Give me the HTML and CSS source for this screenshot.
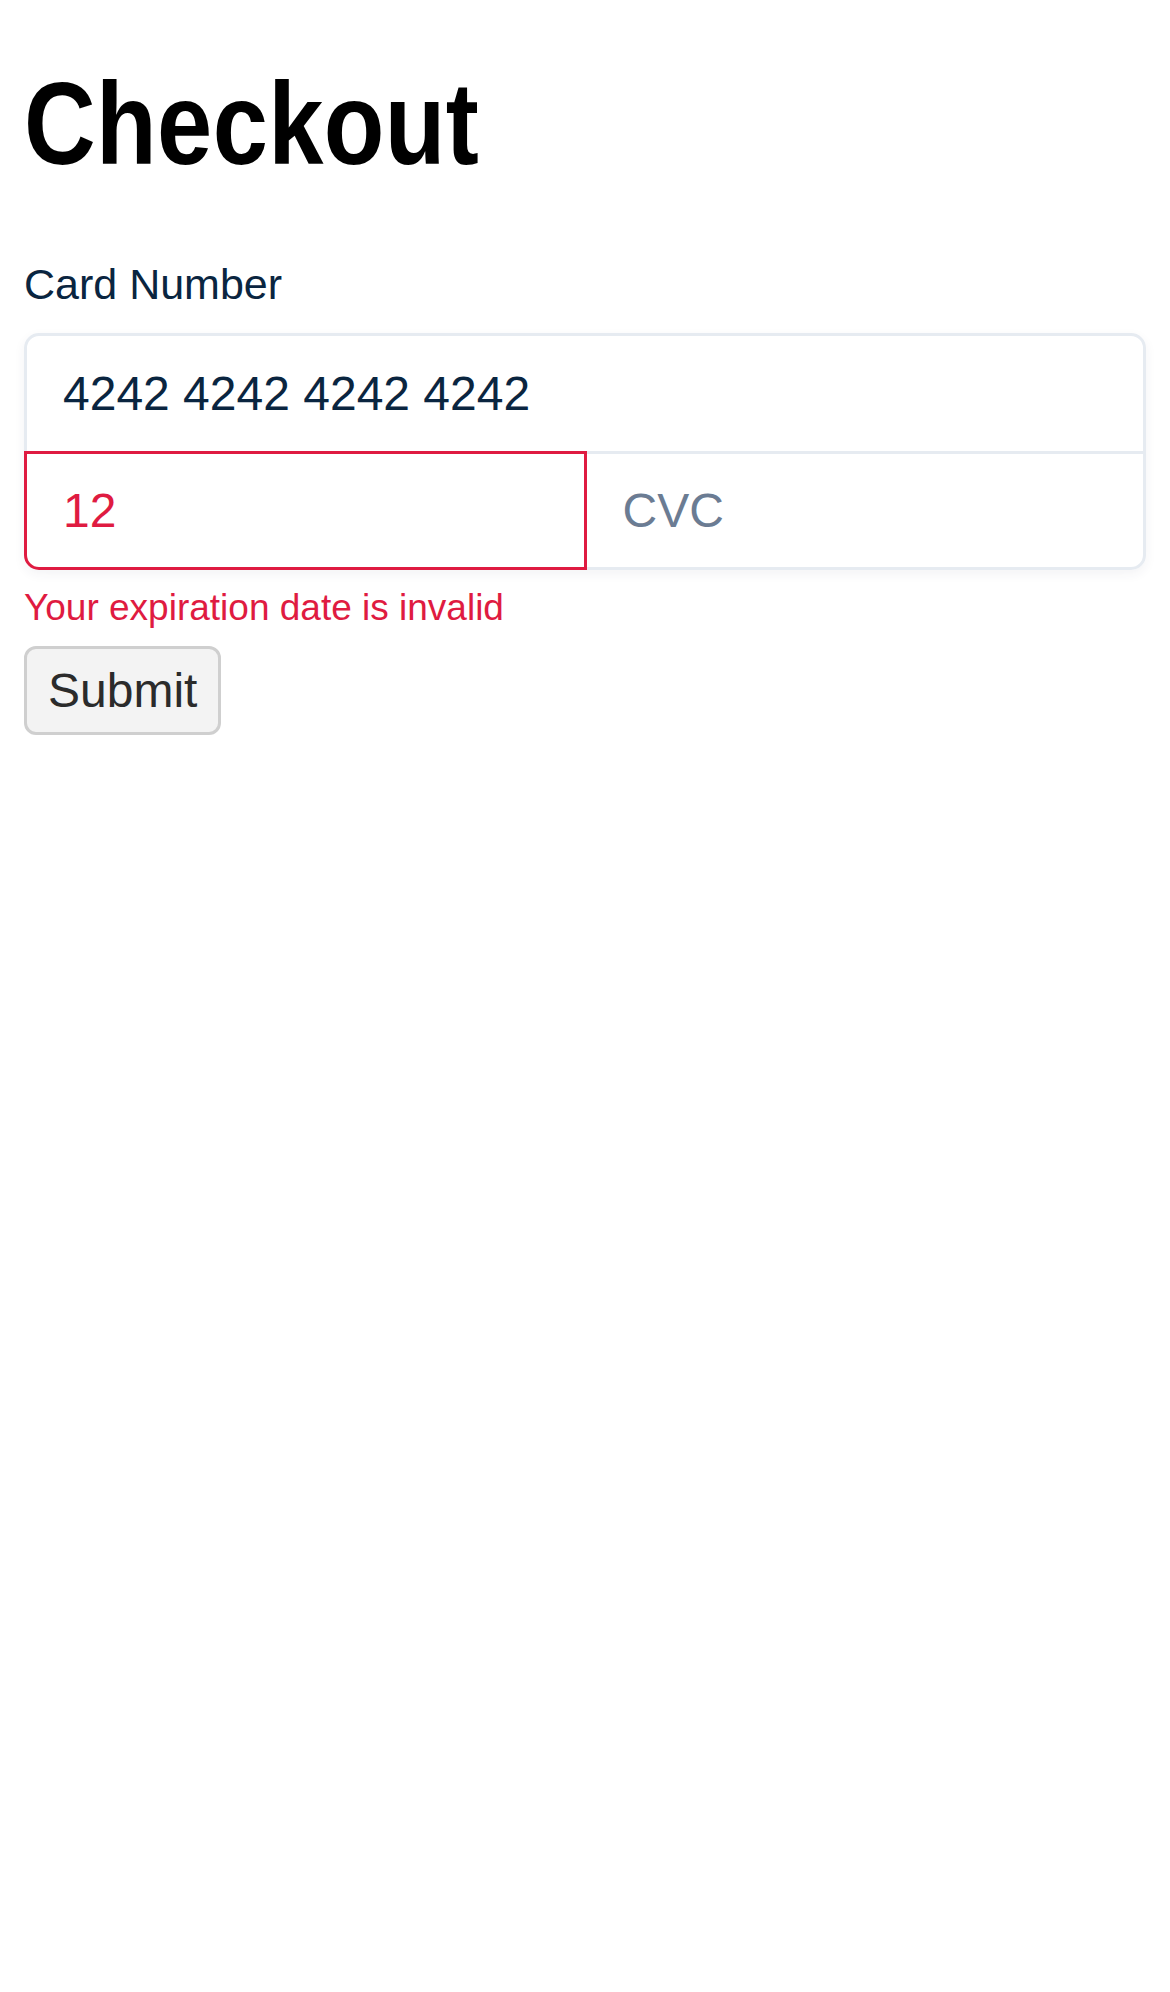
FILE: index.html
```html
<!DOCTYPE html>
<html lang="en">
<head>
<meta charset="utf-8">
<title>Checkout</title>
<link rel="stylesheet" href="styles.css">
</head>
<body>
<main class="page">
  <h1 class="title"><span class="title-text">Checkout</span></h1>
  <form class="form">
    <label class="label">Card Number</label>
    <div class="card-box">
      <div class="field field-number"><span class="value">4242 4242 4242 4242</span></div>
      <div class="field-row">
        <div class="field field-exp is-invalid"><span class="value">12</span></div>
        <div class="field field-cvc"><span class="placeholder">CVC</span></div>
      </div>
    </div>
    <p class="error">Your expiration date is invalid</p>
    <button type="button" class="submit">Submit</button>
  </form>
</main>
</body>
</html>
```

FILE: styles.css
```css
html, body {
  margin: 0;
  padding: 0;
  background: #ffffff;
}

.page {
  padding: 24px;
  font-family: "Liberation Sans", Arial, sans-serif;
}

.title {
  margin: 32px 0 68px;
  font-family: "Liberation Sans", Arial, sans-serif;
  font-size: 116px;
  line-height: 136px;
  font-weight: 700;
  color: #000000;
}

.title-text {
  display: inline-block;
  transform: scaleX(0.855);
  transform-origin: 0 50%;
  letter-spacing: 0.5px;
}

.form {
  display: flex;
  flex-direction: column;
  align-items: flex-start;
}

.label {
  display: block;
  font-size: 43px;
  color: #0a2540;
  margin-bottom: 24px;
}

.card-box {
  align-self: stretch;
  display: flex;
  flex-direction: column;
  border-radius: 15px;
  box-shadow: 0 4px 12px rgba(50, 50, 93, 0.06);
}

.field {
  border: 3px solid #e6ebf1;
  background: #ffffff;
  padding: 30px 36px;
  font-size: 48px;
  line-height: 55px;
  color: #0a2540;
}

.field-number {
  border-radius: 15px 15px 0 0;
}

.field-row {
  display: flex;
  margin-top: -3px;
}

.field-row .field {
  flex: 1 1 0;
  padding-top: 29px;
  padding-bottom: 29px;
}

.field-exp {
  border-radius: 0 0 0 15px;
}

.field-cvc {
  border-radius: 0 0 15px 0;
  margin-left: -3px;
}

.field.is-invalid {
  border-color: #df1b41;
  color: #df1b41;
  position: relative;
  z-index: 1;
}

.placeholder {
  color: #6b7c93;
}

.error {
  margin: 16px 0 17px;
  font-size: 37px;
  line-height: 43px;
  color: #df1b41;
}

.submit {
  font-family: "Liberation Sans", Arial, sans-serif;
  font-size: 48px;
  line-height: 55px;
  color: #2b2b2b;
  background: #f3f3f3;
  border: 3px solid #cfcfcf;
  border-radius: 12px;
  padding: 14px 21px;
  margin: 0;
}
```
